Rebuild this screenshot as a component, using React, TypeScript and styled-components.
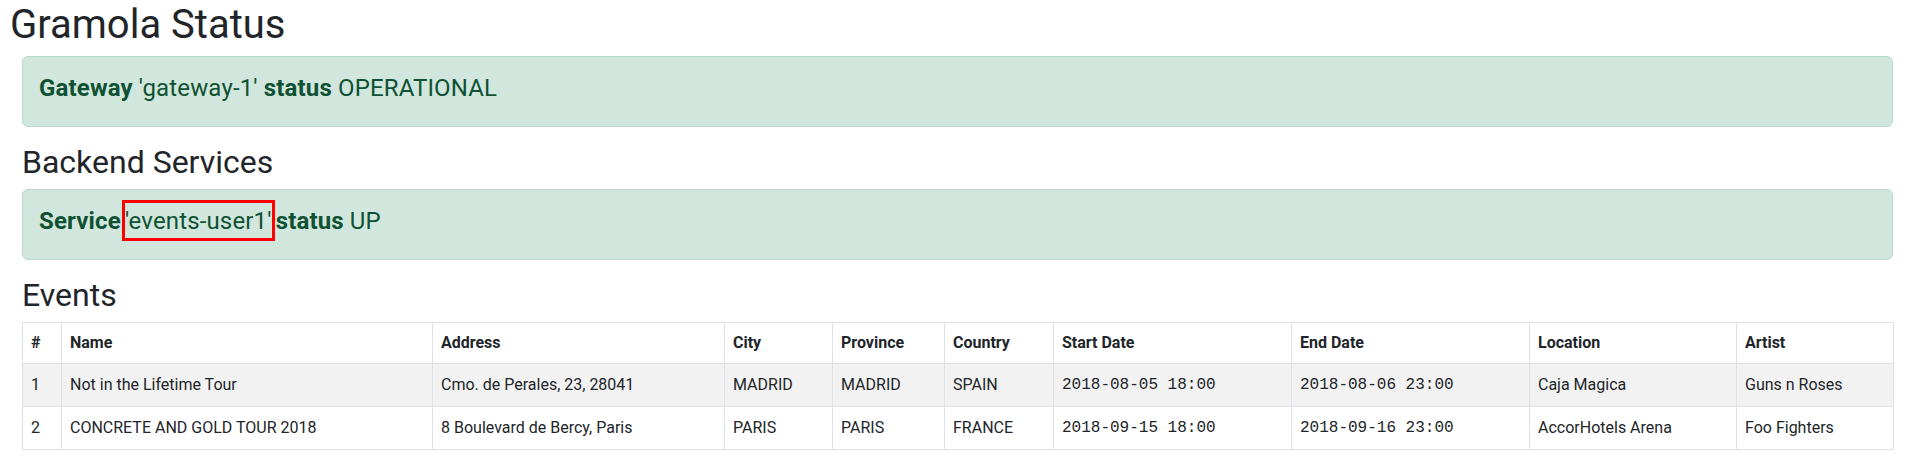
import React from "react";
import styled, { createGlobalStyle } from "styled-components";

const GlobalStyle = createGlobalStyle`
  body {
    margin: 0;
    background: #fff;
    color: #212529;
    font-family: Roboto, "Liberation Sans", sans-serif;
    font-size: 16px;
    line-height: 1.5;
  }
  * { box-sizing: border-box; }
`;

const PageWrapper = styled.div`
  display: flex;
  flex-direction: column;
  padding: 1px 25px 0 10px;
`;

const Title = styled.h1`
  margin: 0;
  font-size: 40px;
  font-weight: 400;
  line-height: 1.2;
`;

const Content = styled.div`
  display: flex;
  flex-direction: column;
  padding-left: 12px;
  margin-top: 7px;
`;

const SectionTitle = styled.h2`
  margin: 0 0 8px;
  font-size: 32px;
  font-weight: 400;
  line-height: 1.2;
`;

const Alert = styled.div`
  padding: 17px 16px 15px;
  margin-bottom: 16px;
  color: #0f5132;
  background-color: #d1e7dd;
  border: 1px solid #badbcc;
  border-radius: 6px;
`;

const AlertText = styled.h4`
  margin: 0 0 8px;
  font-size: 24px;
  font-weight: 400;
  line-height: 1.2;
  letter-spacing: 0.15px;

  b {
    font-weight: 700;
  }
`;

const Highlight = styled.span`
  padding: 4px 0 3px;
  margin: 0 -2px;
  outline: 3px solid #ff0000;
`;

const Table = styled.table`
  width: 100%;
  table-layout: fixed;
  border-collapse: collapse;
  color: #212529;
`;

const HeadCell = styled.th`
  padding: 8px;
  border: 1px solid #dee2e6;
  text-align: left;
  font-weight: 700;
  white-space: nowrap;
`;

const BodyRow = styled.tr<{ $striped?: boolean }>`
  background: ${(p) => (p.$striped ? "#f2f2f2" : "#fff")};
`;

const Cell = styled.td<{ $mono?: boolean }>`
  padding: 9px 8px;
  border: 1px solid #dee2e6;
  white-space: nowrap;
  font-family: ${(p) =>
    p.$mono ? '"Liberation Mono", "DejaVu Sans Mono", monospace' : "inherit"};
`;

const columns = [
  { title: "#", width: 39 },
  { title: "Name", width: 371 },
  { title: "Address", width: 292 },
  { title: "City", width: 108 },
  { title: "Province", width: 112 },
  { title: "Country", width: 109 },
  { title: "Start Date", width: 238 },
  { title: "End Date", width: 238 },
  { title: "Location", width: 207 },
  { title: "Artist", width: 157 },
];

const events = [
  {
    id: 1,
    name: "Not in the Lifetime Tour",
    address: "Cmo. de Perales, 23, 28041",
    city: "MADRID",
    province: "MADRID",
    country: "SPAIN",
    startDate: "2018-08-05 18:00",
    endDate: "2018-08-06 23:00",
    location: "Caja Magica",
    artist: "Guns n Roses",
  },
  {
    id: 2,
    name: "CONCRETE AND GOLD TOUR 2018",
    address: "8 Boulevard de Bercy, Paris",
    city: "PARIS",
    province: "PARIS",
    country: "FRANCE",
    startDate: "2018-09-15 18:00",
    endDate: "2018-09-16 23:00",
    location: "AccorHotels Arena",
    artist: "Foo Fighters",
  },
];

export default function App() {
  return (
    <PageWrapper>
      <GlobalStyle />
      <Title>Gramola Status</Title>
      <Content>
        <Alert>
          <AlertText>
            <b>Gateway</b> 'gateway-1' <b>status</b> OPERATIONAL
          </AlertText>
        </Alert>

        <SectionTitle>Backend Services</SectionTitle>
        <Alert>
          <AlertText>
            <b>Service</b> <Highlight>'events-user1'</Highlight> <b>status</b> UP
          </AlertText>
        </Alert>

        <SectionTitle>Events</SectionTitle>
        <Table>
          <colgroup>
            {columns.map((c) => (
              <col key={c.title} style={{ width: c.width }} />
            ))}
          </colgroup>
          <thead>
            <tr>
              {columns.map((c) => (
                <HeadCell key={c.title}>{c.title}</HeadCell>
              ))}
            </tr>
          </thead>
          <tbody>
            {events.map((e, i) => (
              <BodyRow key={e.id} $striped={i % 2 === 0}>
                <Cell>{e.id}</Cell>
                <Cell>{e.name}</Cell>
                <Cell>{e.address}</Cell>
                <Cell>{e.city}</Cell>
                <Cell>{e.province}</Cell>
                <Cell>{e.country}</Cell>
                <Cell $mono>{e.startDate}</Cell>
                <Cell $mono>{e.endDate}</Cell>
                <Cell>{e.location}</Cell>
                <Cell>{e.artist}</Cell>
              </BodyRow>
            ))}
          </tbody>
        </Table>
      </Content>
    </PageWrapper>
  );
}
